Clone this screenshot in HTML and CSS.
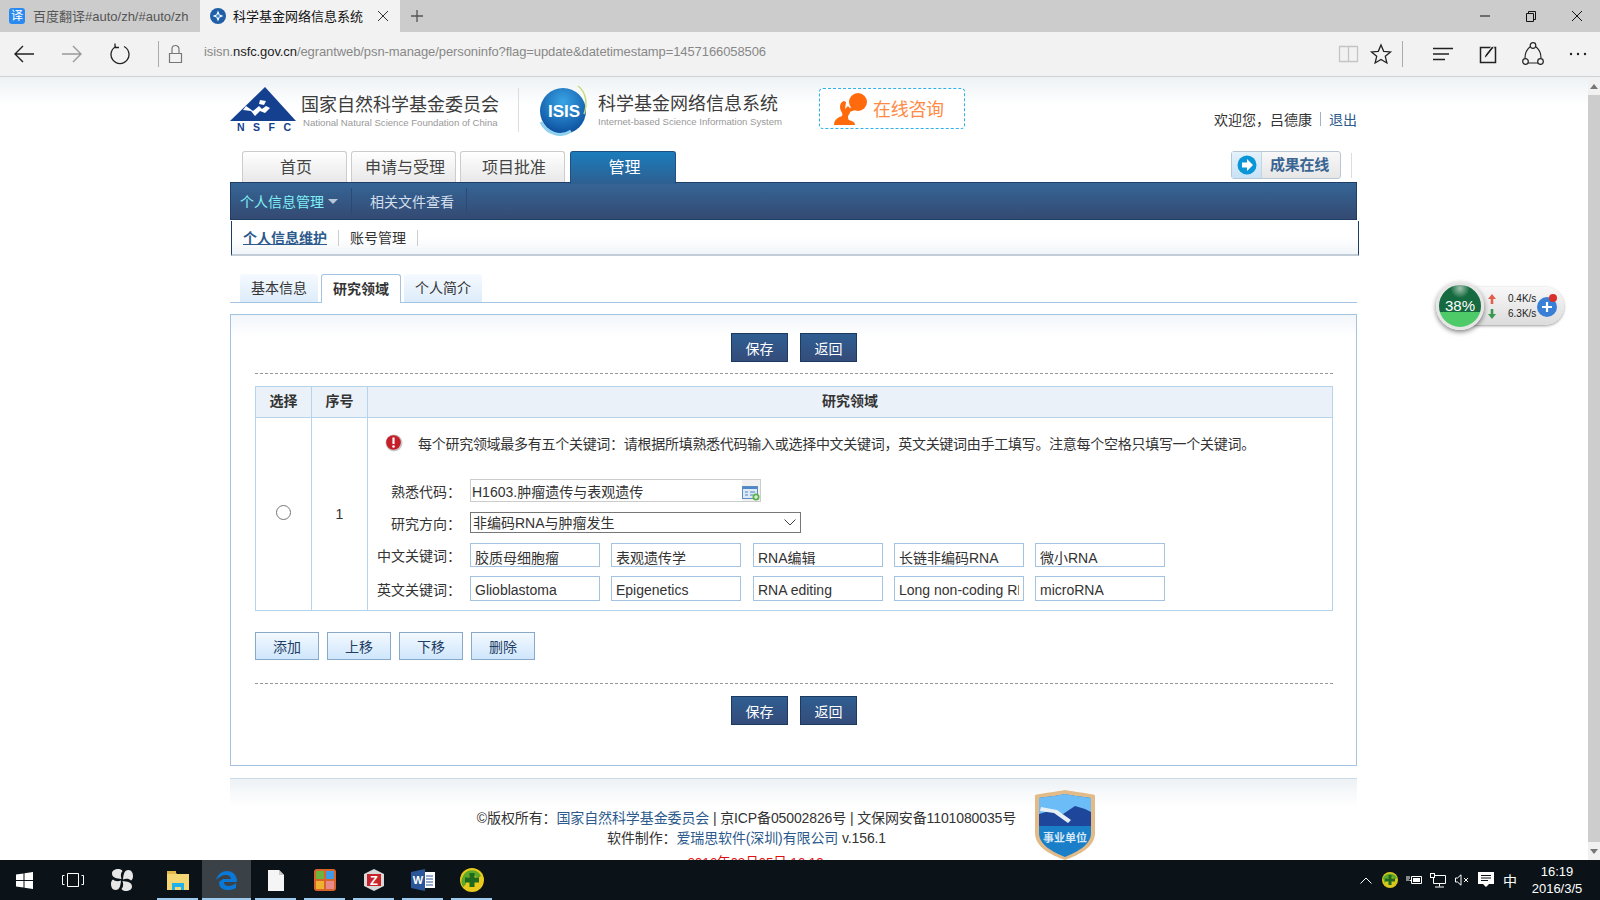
FILE: index.html
```html
<!DOCTYPE html>
<html lang="zh-CN">

<head>
    <meta charset="UTF-8">
    <title>科学基金网络信息系统</title>
    <link rel="stylesheet" href="styles.css">
</head>

<body>
    <!-- 浏览器标签栏 -->
    <div class="tabstrip">
        <div class="btab">
            <span class="fav-fy">译</span>
            <span class="btab-text">百度翻译#auto/zh/#auto/zh</span>
        </div>
        <div class="btab btab-on">
            <svg class="fav" width="16" height="16" viewBox="0 0 16 16"><circle cx="8" cy="8" r="8" fill="#1f5fa8"/><path d="M8 2.500l1.600 3.900 3.900 1.600-3.900 1.600L8 13.500 6.400 9.600 2.500 8l3.900-1.600z" fill="#fff"/><circle cx="8" cy="8" r="1.800" fill="#3d8ad0"/></svg>
            <span class="btab-text">科学基金网络信息系统</span>
            <svg class="btab-x" width="12" height="12" viewBox="0 0 12 12"><path d="M1 1l10 10M11 1L1 11" stroke="#333" fill="none"/></svg>
        </div>
        <svg class="btab-plus" width="14" height="14" viewBox="0 0 14 14"><path d="M7 1v12M1 7h12" stroke="#555" stroke-width="1.3" fill="none"/></svg>
        <div class="winctl">
            <svg width="46" height="32" viewBox="0 0 46 32"><path d="M18 16h10" stroke="#111" fill="none"/></svg>
            <svg width="46" height="32" viewBox="0 0 46 32"><path d="M18.500 13.500h7v8h-7zM20.500 13.500v-2h7v8h-2" stroke="#111" fill="none"/></svg>
            <svg width="46" height="32" viewBox="0 0 46 32"><path d="M18 11l10 10M28 11L18 21" stroke="#111" fill="none"/></svg>
        </div>
    </div>

    <!-- 浏览器地址栏 -->
    <div class="toolbar">
        <div class="tool"><svg width="22" height="20" viewBox="0 0 22 20"><path d="M21 10H2M10 2l-8 8 8 8" stroke="#222" stroke-width="1.400" fill="none"/></svg></div>
        <div class="tool"><svg width="22" height="20" viewBox="0 0 22 20"><path d="M1 10h19M12 2l8 8-8 8" stroke="#999" stroke-width="1.400" fill="none"/></svg></div>
        <div class="tool"><svg width="20" height="22" viewBox="0 0 20 22"><path d="M6 3.500a9 9 0 1 0 8 0M5 0.500v4h4" stroke="#222" stroke-width="1.300" fill="none"/></svg></div>
        <div class="tool-sep"></div>
        <svg class="lock" width="15" height="20" viewBox="0 0 15 20"><path d="M1.500 9.500h12v9h-12zM4 9.500V5a3.500 3.500 0 0 1 7 0v4.500" stroke="#777" stroke-width="1.200" fill="none"/></svg>
        <div class="url">isisn.<b>nsfc.gov.cn</b>/egrantweb/psn-manage/personinfo?flag=update&amp;datetimestamp=1457166058506</div>
        <svg class="tool-s" width="32" height="20" viewBox="0 0 32 20"><path d="M6.500 2.500h9v15h-9zM15.500 2.500h9v15h-9zM6.500 17.500h18" stroke="#c4c4c4" stroke-width="1.300" fill="none"/></svg>
        <svg class="tool-s" width="32" height="22" viewBox="0 0 32 22"><path d="M16 2l2.700 6.300 6.800.6-5.200 4.400 1.600 6.700-5.900-3.600-5.900 3.600 1.600-6.700-5.200-4.400 6.800-.6z" stroke="#222" stroke-width="1.300" fill="none"/></svg>
        <div class="tool-sep sep-r"></div>
        <div class="tool-r"><svg width="20" height="16" viewBox="0 0 20 16"><path d="M0 2.500h20M0 8h16M0 13.500h12" stroke="#222" stroke-width="1.300" fill="none"/></svg></div>
        <div class="tool-r"><svg width="18" height="20" viewBox="0 0 18 20"><path d="M1.500 3.500h15v15h-15z" stroke="#222" stroke-width="1.500" fill="none"/><path d="M5 15l1-4 7-9 2 1.500-7 9z" fill="#222" stroke="#f2f2f2"/></svg></div>
        <div class="tool-r"><svg width="22" height="24" viewBox="0 0 22 24"><path d="M8.500 4.500C5 7 3 11 3 16M13.500 4.500C17 7 19 11 19 16M6 21h10" stroke="#222" stroke-width="1.200" fill="none"/><circle cx="11" cy="3.500" r="2.800" fill="none" stroke="#222" stroke-width="1.200"/><circle cx="3.500" cy="19.500" r="2.800" fill="none" stroke="#222" stroke-width="1.200"/><circle cx="18.500" cy="19.500" r="2.800" fill="none" stroke="#222" stroke-width="1.200"/></svg></div>
        <div class="tool-r"><svg width="20" height="4" viewBox="0 0 20 4"><circle cx="3" cy="2" r="1.200" fill="#222"/><circle cx="10" cy="2" r="1.200" fill="#222"/><circle cx="17" cy="2" r="1.200" fill="#222"/></svg></div>
    </div>

    <div class="viewport">
        <div class="page">
            <div class="wrap">
                <!-- 头部 -->
                <div class="head">
                    <div class="logo-nsfc">
                        <svg width="66" height="36" viewBox="0 0 66 36"><path d="M35 0L66 34H0z" fill="#15408f"/><path d="M16 19l7 5 6-5 3 3 4-3 4 2-5 5-5-2-5 5-4-5-8-1z" fill="#fff"/><path d="M30 13l6 1-2 4-5-1z" fill="#fff"/></svg>
                        <div class="nsfc-abbr">NSFC</div>
                    </div>
                    <div class="logo-text nsfc-text">
                        <div class="logo-cn">国家自然科学基金委员会</div>
                        <div class="logo-en">National Natural Science Foundation of China</div>
                    </div>
                    <div class="head-sep"></div>
                    <svg class="globe" width="52" height="52" viewBox="0 0 52 52">
                        <defs><radialGradient id="g1" cx="50%" cy="30%" r="70%"><stop offset="0" stop-color="#3aa5e6"/><stop offset="1" stop-color="#0b4f9e"/></radialGradient></defs>
                        <circle cx="25" cy="27" r="23" fill="url(#g1)"/>
                        <path d="M40 2c8 6 10 18 6 28" stroke="#c5dc7e" stroke-width="1.500" fill="none"/>
                        <path d="M3 38c6 12 20 16 30 9" stroke="#8fd0ef" stroke-width="3" fill="none"/>
                        <text x="26" y="33" class="globe-text" text-anchor="middle">ISIS</text>
                    </svg>
                    <div class="logo-text isis-text">
                        <div class="logo-cn">科学基金网络信息系统</div>
                        <div class="logo-en">Internet-based Science Information System</div>
                    </div>
                    <div class="consult">
                        <svg width="34" height="32" viewBox="0 0 34 32"><path d="M0 32c0-6 5-8 8-9 1-2 0-3-1-5-2-4-1-9 3-10l2 1-1 7 3-3c4 3 2 8 0 10 0 2 0 3 1 4 3 1 6 2 6 5z" fill="#ff6a0d"/><circle cx="24" cy="9" r="9" fill="#ff6a0d"/><path d="M17 14l-4 6 8-3z" fill="#ff6a0d"/></svg>
                        <span>在线咨询</span>
                    </div>
                    <div class="welcome">欢迎您，吕德康<i></i><a>退出</a></div>
                </div>

                <!-- 主菜单 -->
                <div class="mainnav">
                    <div class="mtab">首页</div>
                    <div class="mtab">申请与受理</div>
                    <div class="mtab">项目批准</div>
                    <div class="mtab mtab-on">管理</div>
                    <div class="result-btn">
                        <span class="result-ic"><svg width="20" height="20" viewBox="0 0 20 20"><circle cx="10" cy="10" r="9.500" fill="#0a96d6"/><path d="M5 7.500h5V4l6 6-6 6v-3.500H5z" fill="#fff"/></svg></span>
                        <span class="result-tx">成果在线</span>
                    </div>
                    <div class="result-sep"></div>
                </div>
                <div class="subbar">
                    <span class="sb-item sb-on">个人信息管理<em></em></span>
                    <span class="sb-item">相关文件查看</span>
                </div>
                <div class="thirdbar">
                    <a class="tb-on">个人信息维护</a>
                    <a>账号管理</a>
                </div>

                <!-- 内容页签 -->
                <div class="tabs">
                    <div class="tab">基本信息</div>
                    <div class="tab tab-on">研究领域</div>
                    <div class="tab">个人简介</div>
                </div>

                <div class="panel">
                    <div class="btn-row">
                        <button class="btn-dark">保存</button>
                        <button class="btn-dark">返回</button>
                    </div>
                    <div class="dash"></div>

                    <table class="grid">
                        <thead>
                            <tr>
                                <th class="col-sel">选择</th>
                                <th class="col-no">序号</th>
                                <th>研究领域</th>
                            </tr>
                        </thead>
                        <tbody>
                            <tr>
                                <td class="cell-c"><input class="radio" type="radio" name="sel"></td>
                                <td class="cell-c">1</td>
                                <td class="cell-form">
                                    <div class="notice">
                                        <svg width="18" height="18" viewBox="0 0 18 18"><circle cx="9" cy="9" r="8.500" fill="#c9c9c9"/><circle cx="8.500" cy="8.500" r="7.300" fill="#c5202a"/><path d="M8.500 3.500v6.500" stroke="#fff" stroke-width="2.200"/><circle cx="8.500" cy="12.500" r="1.300" fill="#fff"/></svg>
                                        <span>每个研究领域最多有五个关键词：请根据所填熟悉代码输入或选择中文关键词，英文关键词由手工填写。注意每个空格只填写一个关键词。</span>
                                    </div>
                                    <div class="frow frow-code">
                                        <label>熟悉代码：</label>
                                        <div class="code-box">
                                            <input class="code-in" type="text" value="H1603.肿瘤遗传与表观遗传">
                                            <span class="code-pick"><svg width="18" height="17" viewBox="0 0 18 17"><rect x="0.500" y="2.500" width="15" height="12" fill="#dfe9f5" stroke="#5b8bc4"/><rect x="1" y="3" width="14" height="2" fill="#4f86c6"/><path d="M3 8h3M3 11h3M8 8h5M8 11h3" stroke="#4f86c6"/><circle cx="14" cy="13" r="3.500" fill="#5cb24a"/><path d="M12 13h4M14 11v4" stroke="#fff"/></svg></span>
                                        </div>
                                    </div>
                                    <div class="frow frow-dir">
                                        <label>研究方向：</label>
                                        <div class="sel-box">
                                            <select class="sel-in"><option>非编码RNA与肿瘤发生</option></select>
                                            <svg class="sel-arrow" width="12" height="7" viewBox="0 0 12 7"><path d="M0.500 0.500L6 6l5.500-5.500" stroke="#444" fill="none"/></svg>
                                        </div>
                                    </div>
                                    <div class="frow frow-cn">
                                        <label>中文关键词：</label>
                                        <input class="kw" type="text" value="胶质母细胞瘤">
                                        <input class="kw" type="text" value="表观遗传学">
                                        <input class="kw" type="text" value="RNA编辑">
                                        <input class="kw" type="text" value="长链非编码RNA">
                                        <input class="kw" type="text" value="微小RNA">
                                    </div>
                                    <div class="frow frow-en">
                                        <label>英文关键词：</label>
                                        <input class="kw" type="text" value="Glioblastoma">
                                        <input class="kw" type="text" value="Epigenetics">
                                        <input class="kw" type="text" value="RNA editing">
                                        <input class="kw" type="text" value="Long non-coding RNA">
                                        <input class="kw" type="text" value="microRNA">
                                    </div>
                                </td>
                            </tr>
                        </tbody>
                    </table>

                    <div class="ops">
                        <button class="btn-light">添加</button>
                        <button class="btn-light">上移</button>
                        <button class="btn-light">下移</button>
                        <button class="btn-light">删除</button>
                    </div>
                    <div class="dash dash-b"></div>
                    <div class="btn-row btn-row-b">
                        <button class="btn-dark">保存</button>
                        <button class="btn-dark">返回</button>
                    </div>
                </div>

                <!-- 页脚 -->
                <div class="foot">
                    <div class="foot-text">
                        <div>©版权所有：<a>国家自然科学基金委员会</a> | 京ICP备05002826号 | 文保网安备1101080035号</div>
                        <div>软件制作：<a>爱瑞思软件(深圳)有限公司</a> v.156.1</div>
                        <div class="foot-date">2016年03月05日 16:19</div>
                    </div>
                    <svg class="badge" width="60" height="70" viewBox="0 0 60 70">
                        <path d="M30 0C20 2 8 3 0 5v38c0 14 16 22 30 27 14-5 30-13 30-27V5C52 3 40 2 30 0z" fill="#e2bb88"/>
                        <path d="M30 4C21 6 10 7 4 8v35c0 12 14 19 26 24 12-5 26-12 26-24V8C50 7 39 6 30 4z" fill="#1a7fc8"/>
                        <path d="M4 8c6-1 17-2 26-4 9 2 20 3 26 4v16H4z" fill="#6cbcf7"/>
                        <path d="M4 24l10-3 14 3 12-8 10 3 6 3v14H4z" fill="#1e479c"/>
                        <path d="M5 21l14 2 14 10 3-3-14-10-16-3z" fill="#e8eef5"/>
                        <text x="30" y="52" class="badge-text" text-anchor="middle">事业单位</text>
                    </svg>
                </div>
            </div>
        </div>
        <div class="scrollbar">
            <div class="sc-arrow"><svg width="8" height="5" viewBox="0 0 8 5"><path d="M4 0l4 5H0z" fill="#777"/></svg></div>
            <div class="sc-thumb"></div>
            <div class="sc-arrow"><svg width="8" height="5" viewBox="0 0 8 5"><path d="M4 5L0 0h8z" fill="#777"/></svg></div>
        </div>
    </div>

    <!-- 悬浮网速球 -->
    <div class="netball">
        <div class="net-pill">
            <div class="net-rates">
                <div><svg width="8" height="10" viewBox="0 0 8 10"><path d="M4 0l4 5H5.300v5H2.700V5H0z" fill="#e0604c"/></svg><span>0.4K/s</span></div>
                <div><svg width="8" height="10" viewBox="0 0 8 10"><path d="M4 10L0 5h2.700V0h2.600v5H8z" fill="#3a9a50"/></svg><span>6.3K/s</span></div>
            </div>
            <div class="net-plus"><svg width="10" height="10" viewBox="0 0 10 10"><path d="M5 0v10M0 5h10" stroke="#fff" stroke-width="2.200"/></svg></div>
            <div class="net-dot"></div>
        </div>
        <div class="net-ball">38%</div>
    </div>

    <!-- 任务栏 -->
    <div class="taskbar">
        <div class="tk tk-s"><svg width="17" height="17" viewBox="0 0 17 17"><path d="M0 2.500L7.500 1.400v6.600H0zM8.500 1.300L17 0v8H8.500zM0 9h7.500v6.600L0 14.500zM8.500 9H17v8l-8.500-1.300z" fill="#fff"/></svg></div>
        <div class="tk tk-s"><svg width="22" height="14" viewBox="0 0 22 14"><path d="M5.500 0.500h11v13h-11z" stroke="#fff" fill="none"/><path d="M2.500 2.500H0.500v9h2M19.500 2.500h2v9h-2" stroke="#fff" fill="none"/></svg></div>
        <div class="tk tk-s"><svg width="22" height="22" viewBox="0 0 22 22"><path id="blade" d="M10.500 10C6 9.500 1 9 1 4.500 1 1.500 4 0 7 0c2 0 3.500.5 4.500 2-2 2-2 5-1 8z" fill="#e6e6e6"/><use href="#blade" transform="rotate(90 11 11)"/><use href="#blade" transform="rotate(180 11 11)"/><use href="#blade" transform="rotate(270 11 11)"/></svg></div>
        <div class="tk tk-gap tk-u"><svg width="22" height="20" viewBox="0 0 22 20"><path d="M0 2h8l2 2h12v16H0z" fill="#f4d675"/><rect x="0" y="1" width="9" height="3" fill="#e3b84a"/><path d="M5 20v-7h12v7h-3v-3H8v3z" fill="#1eb1ea"/></svg></div>
        <div class="tk tk-active tk-u"><svg width="22" height="22" viewBox="0 0 22 22"><path d="M3 13h18c0-7-4-11-10-11C6 2 2 5 0 11c3-3 6-5 10-5 3 0 5 2 5 4H7c-1 1-3 2-4 3zM3 13c0 6 4 8 9 8 3 0 6-1 8-2v-5c-2 2-5 3-7 3-3 0-5-1-5-4z" fill="#0a78d7"/></svg></div>
        <div class="tk tk-u"><svg width="16" height="21" viewBox="0 0 16 21"><path d="M0 0h11l5 5v16H0z" fill="#f5f5f5"/><path d="M11 0v5h5z" fill="#c9c9c9"/></svg></div>
        <div class="tk tk-u"><svg width="22" height="22" viewBox="0 0 22 22"><rect width="22" height="22" rx="3" fill="#d8642a"/><rect x="2" y="2" width="8" height="8" fill="#6fb33f"/><rect x="12" y="2" width="8" height="8" fill="#3f9be8"/><rect x="2" y="12" width="8" height="8" fill="#eeb233"/><rect x="12" y="12" width="8" height="8" fill="#e98a8a"/></svg></div>
        <div class="tk tk-u"><svg width="20" height="22" viewBox="0 0 20 22"><path d="M10 0l10 5v12l-10 5L0 17V5z" fill="#d8d8d8"/><rect x="3" y="5" width="14" height="12" fill="#c8222a"/><text x="10" y="16" class="tk-z" text-anchor="middle">Z</text></svg></div>
        <div class="tk tk-u"><svg width="24" height="22" viewBox="0 0 24 22"><path d="M13 3h11v16H13z" fill="#fff"/><path d="M15 7h7M15 10h7M15 13h7M15 16h7" stroke="#2a5699"/><path d="M0 3l14-3v22L0 19z" fill="#2a5699"/><text x="7" y="15" class="tk-w" text-anchor="middle">W</text></svg></div>
        <div class="tk tk-u"><svg width="24" height="24" viewBox="0 0 24 24"><circle cx="12" cy="12" r="12" fill="#e8c91c"/><path d="M3 8a10 10 0 0 1 18 0l-3 2a7 7 0 0 0-12 6l-3 3a11 11 0 0 1 0-11z" fill="#5ca828"/><path d="M9.500 5h5v4.500H19v5h-4.500V19h-5v-4.500H5v-5h4.500z" fill="#1d6a1f"/></svg></div>

        <div class="tray">
            <div class="ty"><svg width="12" height="7" viewBox="0 0 12 7"><path d="M0.500 6.500L6 1l5.500 5.500" stroke="#fff" fill="none"/></svg></div>
            <div class="ty"><svg width="16" height="16" viewBox="0 0 16 16"><circle cx="8" cy="8" r="8" fill="#d9c71c"/><path d="M1 6a8 8 0 0 1 14 0l-2 1a6 6 0 0 0-10 5z" fill="#5ca828"/><path d="M6.500 3h3v3.500H13v3H9.500V13h-3V9.500H3v-3h3.500z" fill="#1d6a1f"/></svg></div>
            <div class="ty"><svg width="16" height="12" viewBox="0 0 16 12"><path d="M0 6h3M1 2v3M3 2v3" stroke="#fff"/><path d="M3.500 6.500h2M5.500 2.500h10v7h-10z" stroke="#fff" fill="none"/><rect x="7" y="4" width="7" height="4" fill="#fff"/></svg></div>
            <div class="ty"><svg width="16" height="15" viewBox="0 0 16 15"><path d="M3.500 2.500h12v8h-12zM9.500 10.500v3M5 14h9" stroke="#fff" fill="none"/><rect x="0.500" y="0.500" width="4" height="4" fill="#0b1318" stroke="#fff"/></svg></div>
            <div class="ty"><svg width="14" height="12" viewBox="0 0 14 12"><path d="M0.500 4h2L6 0.800v10.400L2.500 8h-2z" stroke="#fff" fill="none"/><path d="M9 4l4 4M13 4L9 8" stroke="#fff" fill="none"/></svg></div>
            <div class="ty"><svg width="16" height="16" viewBox="0 0 16 16"><path d="M0 0h16v12h-5l-3 3-3-3H0z" fill="#fff"/><path d="M3 3.500h10M3 6h10M3 8.500h7" stroke="#0b1318"/></svg></div>
            <div class="ty ty-ime">中</div>
            <div class="clock">
                <div>16:19</div>
                <div>2016/3/5</div>
            </div>
        </div>
    </div>
</body>

</html>
```

FILE: styles.css
```css
* {
    box-sizing: border-box;
}

html,
body {
    margin: 0;
    height: 900px;
    overflow: hidden;
}

body {
    position: relative;
    display: flex;
    flex-direction: column;
    width: 1600px;
    font-family: "Liberation Sans", "Noto Sans CJK SC", sans-serif;
    font-size: 14px;
    color: #333;
    background: #fff;
}

button,
input,
select {
    font-family: inherit;
    margin: 0;
}

/* 浏览器标签栏 */
.tabstrip {
    display: flex;
    align-items: center;
    height: 32px;
    flex: none;
    background: #ccc;
}

.btab {
    display: flex;
    align-items: center;
    width: 200px;
    height: 32px;
    padding: 0 0 1px 9px;
    font-size: 13px;
    color: #555;
    white-space: nowrap;
}

.btab-text {
    margin-left: 8px;
}

.fav-fy {
    display: block;
    width: 16px;
    height: 16px;
    border-radius: 3px;
    background: #2a8af0;
    color: #fff;
    font-size: 12px;
    line-height: 16px;
    text-align: center;
}

.btab-on {
    padding-left: 10px;
    background: #f2f2f2;
    color: #111;
}

.btab-on .btab-text {
    margin-left: 7px;
}

.btab-x {
    margin-left: 14px;
}

.btab-plus {
    margin-left: 10px;
}

.winctl {
    display: flex;
    margin-left: auto;
    margin-right: 0;
}

/* 浏览器地址栏 */
.toolbar {
    display: flex;
    align-items: center;
    height: 45px;
    flex: none;
    background: #f2f2f2;
    border-bottom: 1px solid #cfd2d4;
}

.tool {
    display: flex;
    align-items: center;
    justify-content: center;
    width: 48px;
}

.tool-sep {
    width: 1px;
    height: 26px;
    margin-left: 14px;
    background: #aaa;
}

.sep-r {
    margin-left: 5px;
    margin-right: 17px;
}

.lock {
    margin-left: 9px;
}

.url {
    flex: 1;
    margin-left: 21px;
    padding-bottom: 6px;
    font-size: 13px;
    letter-spacing: -0.090px;
    color: #888;
    white-space: nowrap;
}

.url b {
    font-weight: normal;
    color: #222;
}

.tool-r {
    display: flex;
    align-items: center;
    justify-content: center;
    width: 45px;
}

/* 页面区域 */
.viewport {
    display: flex;
    flex: 1;
    min-height: 0;
}

.page {
    flex: 1;
    min-width: 0;
    overflow: hidden;
    background: linear-gradient(#eef2f5, #fff 29px);
}

.wrap {
    width: 1127px;
    margin-left: 230px;
}

.scrollbar {
    display: flex;
    flex-direction: column;
    width: 12px;
    background: #f1f1f1;
}

.sc-arrow {
    display: flex;
    align-items: center;
    justify-content: center;
    height: 18px;
}

.sc-thumb {
    flex: 1;
    background: #cdcdcd;
}

/* 头部 */
.head {
    display: flex;
    height: 74px;
}

.logo-nsfc {
    width: 66px;
    margin-top: 10px;
}

.logo-nsfc svg {
    display: block;
}

.nsfc-abbr {
    margin-top: -1px;
    padding-left: 7px;
    font-size: 10.500px;
    line-height: 11px;
    font-weight: bold;
    letter-spacing: 8.500px;
    color: #15408f;
    white-space: nowrap;
}

.logo-text {
    margin-top: 16px;
}

.nsfc-text {
    width: 213px;
    margin-left: 5px;
}

.logo-cn {
    font-size: 18px;
    line-height: 24px;
    color: #3c3c3c;
    white-space: nowrap;
}

.logo-en {
    margin-top: -1px;
    font-size: 9.600px;
    line-height: 14px;
    color: #999;
    white-space: nowrap;
}

.nsfc-text .logo-en {
    margin-left: 2px;
}

.head-sep {
    width: 1px;
    height: 44px;
    margin: 11px 0 0 4px;
    background: #ddd;
}

.globe {
    margin: 7px 0 0 19px;
}

.isis-text {
    margin-left: 8px;
    margin-top: 15px;
    width: 221px;
}

.globe-text {
    font-size: 17px;
    font-weight: bold;
    fill: #fff;
}

.consult {
    display: flex;
    align-items: center;
    width: 146px;
    height: 41px;
    margin-top: 11px;
    padding-left: 14px;
    border: 1px dashed #2fb2ea;
    border-radius: 4px;
    background: #fff;
    font-size: 18px;
    letter-spacing: -0.300px;
    color: #ff8a45;
}

.consult span {
    margin: 0 0 2px 5px;
    white-space: nowrap;
}

.welcome {
    display: flex;
    align-items: center;
    margin-left: auto;
    margin-top: 32px;
    height: 20px;
    white-space: nowrap;
}

.welcome i {
    width: 1px;
    height: 14px;
    margin: 0 8px;
    background: #9bb4cc;
}

.welcome a {
    color: #2c5a8c;
}

/* 主菜单 */
.mainnav {
    display: flex;
    align-items: flex-start;
    height: 31px;
    padding-left: 12px;
}

.mtab {
    width: 105px;
    height: 31px;
    margin-right: 4px;
    padding-left: 3px;
    border: 1px solid #ccc;
    border-bottom: 0;
    border-radius: 3px 3px 0 0;
    background: linear-gradient(#fff, #e8e8e8);
    font-size: 16px;
    line-height: 31px;
    text-align: center;
    color: #444;
}

.mtab-on {
    position: relative;
    width: 106px;
    height: 33px;
    margin-left: 1px;
    border-color: #20507f;
    background: linear-gradient(#1b7cbc, #2e5f90);
    color: #fff;
}

.result-btn {
    display: flex;
    width: 110px;
    height: 28px;
    margin-left: auto;
    border: 1px solid #b9c7d4;
    border-radius: 3px;
    background: linear-gradient(#f8f8f8, #e6e6e6);
}

.result-ic {
    display: flex;
    align-items: center;
    justify-content: center;
    width: 30px;
    background: linear-gradient(#e4f2fb, #c7e2f6);
    border-right: 1px solid #c4d4e0;
}

.result-tx {
    flex: 1;
    padding-right: 3px;
    font-size: 15px;
    font-weight: bold;
    letter-spacing: -0.200px;
    line-height: 26px;
    text-align: center;
    color: #3a6593;
}

.result-sep {
    width: 1px;
    height: 25px;
    margin: 2px 5px 0 10px;
    background: #ddd;
}

.subbar {
    display: flex;
    align-items: center;
    height: 38px;
    padding-left: 9px;
    border: 1px solid #1f3e66;
    background: linear-gradient(#356596, #344a72);
    color: #d3dfec;
}

.sb-item {
    display: flex;
    align-items: center;
    height: 26px;
    padding-right: 12px;
    margin-right: 18px;
    border-right: 1px solid #2a4a75;
}

.sb-on {
    padding-right: 13px;
    color: #7ff0f5;
}

.sb-on em {
    width: 0;
    height: 0;
    margin-left: 4px;
    border: 5px solid transparent;
    border-top-color: #b9c6d6;
    border-bottom: 0;
}

.thirdbar {
    display: flex;
    align-items: center;
    height: 35px;
    width: 1128px;
    margin: 1px 0 0 1px;
    padding-left: 11px;
    border: 1px solid #c2ccd6;
    border-left: 1px solid #1f3e66;
    border-right: 1px solid #1f3e66;
    border-top: 0;
    border-bottom-width: 2px;
    background: linear-gradient(#fff 50%, #f1f5f9);
}

.thirdbar a {
    padding-right: 11px;
    margin-right: 11px;
    border-right: 1px solid #ccc;
    line-height: 16px;
}

.thirdbar .tb-on {
    font-weight: bold;
    color: #2c5a8c;
    text-decoration: underline;
}

/* 内容页签 */
.tabs {
    display: flex;
    height: 29px;
    margin-top: 18px;
    padding-left: 10px;
    border-bottom: 1px solid #a4c3e0;
}

.tab {
    width: 78px;
    height: 28px;
    margin-right: 3px;
    border-radius: 3px 3px 0 0;
    background: linear-gradient(#f5faff, #ddecfa);
    line-height: 28px;
    text-align: center;
}

.tab-on {
    width: 80px;
    height: 29px;
    border: 1px solid #a4c3e0;
    border-bottom: 0;
    background: #fff;
    font-weight: bold;
}

/* 内容面板 */
.panel {
    height: 452px;
    margin-top: 11px;
    padding: 18px 23px 0 24px;
    border: 1px solid #a4c3e0;
    background: linear-gradient(#f2f6fa, #fff 22px);
}

.btn-row {
    display: flex;
    justify-content: center;
    gap: 12px;
}

.btn-dark {
    width: 57px;
    height: 29px;
    padding: 0;
    border: 1px solid #1c3a60;
    background: linear-gradient(#2f5e92, #344c7a);
    font-size: 14px;
    color: #fff;
}

.dash {
    margin-top: 11px;
    border-top: 1px dashed #999;
}

.dash-b {
    margin-top: 23px;
}

.btn-row-b {
    margin-top: 12px;
}

.grid {
    width: 100%;
    margin-top: 12px;
    border-collapse: collapse;
}

.grid th,
.grid td {
    padding: 0;
    border: 1px solid #b5d3ea;
}

.grid th {
    height: 31px;
    padding-bottom: 4px;
    background: #eaf1f8;
    font-size: 14px;
}

.col-sel {
    width: 56px;
}

.col-no {
    width: 56px;
}

.cell-c {
    text-align: center;
}

.radio {
    display: block;
    width: 15px;
    height: 15px;
    margin: 0 auto 4px;
    appearance: none;
    border: 1px solid #777;
    border-radius: 50%;
    background: #fff;
}

.cell-form {
    height: 193px;
    padding-top: 15px !important;
    vertical-align: top;
}

.notice {
    display: flex;
    align-items: center;
    height: 20px;
    margin-bottom: 26px;
    padding-left: 17px;
    white-space: nowrap;
}

.notice span {
    margin-left: 15px;
    letter-spacing: -0.280px;
}

.frow {
    display: flex;
    align-items: center;
}

.frow label {
    width: 93px;
    margin-right: 9px;
    flex: none;
    text-align: right;
    white-space: nowrap;
}

.frow-dir {
    margin-top: 10px;
}

.frow-cn {
    margin-top: 10px;
}

.frow-en {
    margin-top: 9px;
}

.code-box {
    display: flex;
    width: 291px;
    height: 23px;
    border: 1px solid #ccc;
}

.code-in {
    flex: 1;
    min-width: 0;
    padding: 0 1px;
    border: 0;
    background: transparent;
    font-size: 14px;
    color: #333;
}

.code-pick {
    display: flex;
    align-items: flex-end;
    justify-content: flex-end;
    width: 18px;
    background: #f0f0f0;
}

.sel-box {
    position: relative;
    width: 331px;
    height: 21px;
}

.sel-in {
    display: block;
    width: 100%;
    height: 100%;
    padding: 0 2px;
    appearance: none;
    border: 1px solid #777;
    border-radius: 0;
    background: #fff;
    font-size: 14px;
    color: #333;
}

.sel-arrow {
    position: absolute;
    top: 7px;
    right: 5px;
}

.kw {
    width: 130px;
    height: 24px;
    margin-right: 11px;
    padding: 3px 4px 0;
    border: 1px solid #a4c3e0;
    border-radius: 0;
    background: #fff;
    font-size: 14px;
    color: #333;
}

.frow .kw:nth-of-type(2) {
    margin-right: 12px;
}

.frow-en .kw {
    height: 25px;
}

.ops {
    display: flex;
    gap: 8px;
    margin-top: 21px;
}

.btn-light {
    width: 64px;
    height: 28px;
    padding: 0;
    border: 1px solid #8aa9c8;
    background: linear-gradient(#f3f9ff, #cfe6fc);
    font-size: 14px;
    color: #1f3f66;
}

/* 页脚 */
.foot {
    display: flex;
    height: 120px;
    margin-top: 12px;
    border-top: 1px solid #c8dcec;
    background: linear-gradient(#eef2f5, #fff 28px);
}

.foot-text {
    width: 787px;
    padding: 29px 0 0 246px;
    font-size: 14px;
    letter-spacing: -0.120px;
    line-height: 20px;
    text-align: center;
    white-space: nowrap;
}

.foot-text a {
    color: #2c5a8c;
}

.foot-date {
    margin-top: 5px;
    padding-left: 18px;
    font-size: 13.500px;
    color: #e01010;
}

.badge {
    margin: 11px 0 0 18px;
}

.badge-text {
    font-size: 11px;
    font-weight: bold;
    fill: #d7e8f6;
}

/* 悬浮网速球 */
.netball {
    position: absolute;
    left: 1436px;
    top: 281px;
    width: 129px;
    height: 52px;
}

.net-pill {
    position: absolute;
    left: 22px;
    top: 6px;
    width: 106px;
    height: 38px;
    padding-left: 30px;
    border-radius: 19px;
    background: linear-gradient(#f8f8f8, #dcdcdc);
    box-shadow: 0 1px 3px rgba(0, 0, 0, 0.4);
}

.net-rates {
    padding-top: 4px;
    font-size: 10px;
    line-height: 15px;
    color: #222;
}

.net-rates div {
    display: flex;
    align-items: center;
    gap: 12px;
}

.net-plus {
    position: absolute;
    left: 79px;
    top: 10px;
    display: flex;
    align-items: center;
    justify-content: center;
    width: 20px;
    height: 20px;
    border-radius: 50%;
    background: #3a7fd6;
}

.net-dot {
    position: absolute;
    left: 91px;
    top: 7px;
    width: 8px;
    height: 8px;
    border-radius: 50%;
    background: #d9302c;
}

.net-ball {
    position: absolute;
    left: 0;
    top: 1px;
    width: 48px;
    height: 48px;
    border: 3px solid #e6e6e6;
    border-radius: 50%;
    background: radial-gradient(circle at 50% 8%, rgba(255, 255, 255, 0.6), transparent 22%), linear-gradient(#156b3f 64%, #4fca68 64%);
    box-shadow: 0 2px 5px rgba(0, 0, 0, 0.5);
    font-size: 15px;
    line-height: 42px;
    text-align: center;
    color: #fff;
}

/* 任务栏 */
.taskbar {
    display: flex;
    height: 40px;
    flex: none;
    background: #0b1318;
}

.tk {
    position: relative;
    display: flex;
    align-items: center;
    justify-content: center;
    width: 49px;
    height: 40px;
}

.tk-s {
    width: 48.700px;
}

.tk-gap {
    margin-left: 7px;
}

.tk-active {
    background: #3a4247;
}

.tk-u::after {
    content: "";
    position: absolute;
    left: 4px;
    right: 4px;
    bottom: 0;
    height: 2px;
    background: #9ccbef;
}

.tk-active::after {
    left: 0;
    right: 0;
}

.tk-z {
    font-size: 13px;
    font-weight: bold;
    fill: #fff;
}

.tk-w {
    font-size: 11px;
    font-weight: bold;
    fill: #fff;
}

.tray {
    display: flex;
    align-items: center;
    margin-left: auto;
    padding-right: 4px;
}

.ty {
    display: flex;
    align-items: center;
    justify-content: center;
    width: 24px;
}

.ty-ime {
    font-size: 14px;
    color: #fff;
}

.clock {
    width: 78px;
    margin-left: -4px;
    font-size: 13px;
    line-height: 17px;
    text-align: center;
    color: #fff;
}
```
